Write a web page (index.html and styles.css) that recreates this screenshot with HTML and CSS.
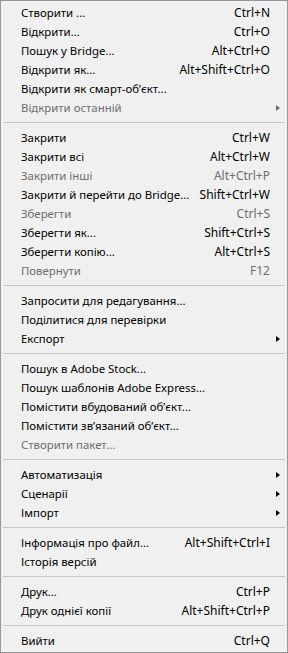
FILE: index.html
```html
<!DOCTYPE html>
<html lang="uk">
<head>
  <meta charset="UTF-8" />
  <meta name="viewport" content="width=device-width, initial-scale=1.0" />
  <title>Файл</title>
  <link rel="stylesheet" href="styles.css">
</head>
<body>
  <div class="menu">
    <div class="item"><span class="label">Створити ...</span><span class="key">Ctrl+N</span></div>
    <div class="item"><span class="label">Відкрити...</span><span class="key">Ctrl+O</span></div>
    <div class="item"><span class="label">Пошук у Bridge...</span><span class="key">Alt+Ctrl+O</span></div>
    <div class="item"><span class="label">Відкрити як...</span><span class="key">Alt+Shift+Ctrl+O</span></div>
    <div class="item"><span class="label">Відкрити як смарт-об’єкт...</span></div>
    <div class="item disabled sub"><span class="label">Відкрити останній</span></div>
    <div class="sep"></div>
    <div class="item"><span class="label">Закрити</span><span class="key">Ctrl+W</span></div>
    <div class="item"><span class="label">Закрити всі</span><span class="key">Alt+Ctrl+W</span></div>
    <div class="item disabled"><span class="label">Закрити інші</span><span class="key">Alt+Ctrl+P</span></div>
    <div class="item"><span class="label">Закрити й перейти до Bridge...</span><span class="key">Shift+Ctrl+W</span></div>
    <div class="item disabled"><span class="label">Зберегти</span><span class="key">Ctrl+S</span></div>
    <div class="item"><span class="label">Зберегти як...</span><span class="key">Shift+Ctrl+S</span></div>
    <div class="item"><span class="label">Зберегти копію...</span><span class="key">Alt+Ctrl+S</span></div>
    <div class="item disabled"><span class="label">Повернути</span><span class="key">F12</span></div>
    <div class="sep"></div>
    <div class="item"><span class="label">Запросити для редагування...</span></div>
    <div class="item"><span class="label">Поділитися для перевірки</span></div>
    <div class="item sub"><span class="label">Експорт</span></div>
    <div class="sep"></div>
    <div class="item"><span class="label">Пошук в Adobe Stock...</span></div>
    <div class="item"><span class="label">Пошук шаблонів Adobe Express...</span></div>
    <div class="item"><span class="label">Помістити вбудований об’єкт...</span></div>
    <div class="item"><span class="label">Помістити зв’язаний об’єкт...</span></div>
    <div class="item disabled"><span class="label">Створити пакет...</span></div>
    <div class="sep"></div>
    <div class="item sub"><span class="label">Автоматизація</span></div>
    <div class="item sub"><span class="label">Сценарії</span></div>
    <div class="item sub"><span class="label">Імпорт</span></div>
    <div class="sep"></div>
    <div class="item"><span class="label">Інформація про файл...</span><span class="key">Alt+Shift+Ctrl+I</span></div>
    <div class="item"><span class="label">Історія версій</span></div>
    <div class="sep"></div>
    <div class="item"><span class="label">Друк...</span><span class="key">Ctrl+P</span></div>
    <div class="item"><span class="label">Друк однієї копії</span><span class="key">Alt+Shift+Ctrl+P</span></div>
    <div class="sep"></div>
    <div class="item"><span class="label">Вийти</span><span class="key">Ctrl+Q</span></div>
  </div>
</body>
</html>
```

FILE: styles.css
```css
body {
  margin: 0;
  font-family: "Noto Sans", "Open Sans", sans-serif;
  font-size: 11.4px;
  color: #000;
  background: #f0f0f0;
}

.menu {
  width: 288px;
  height: 653px;
  box-sizing: border-box;
  border: 1px solid #979797;
  background: #f0f0f0;
  padding: 2px 0;
}

.item {
  display: grid;
  grid-template-columns: 1fr auto 17px;
  align-items: center;
  height: 19px;
  padding-left: 20px;
  white-space: nowrap;
}

.key {
  grid-column: 2;
  padding-left: 8px;
  font-size: 12px;
}

.disabled {
  color: #6d6d6d;
}

.sub::after {
  content: "";
  grid-column: 3;
  justify-self: start;
  margin-left: 6px;
  width: 0;
  height: 0;
  border-top: 3.5px solid transparent;
  border-bottom: 3.5px solid transparent;
  border-left: 4px solid #000;
}

.sub.disabled::after {
  border-left-color: #6d6d6d;
}

.sep {
  height: 1px;
  margin: 5px 2px 5px 2px;
  background: #c5c5c5;
}
```
